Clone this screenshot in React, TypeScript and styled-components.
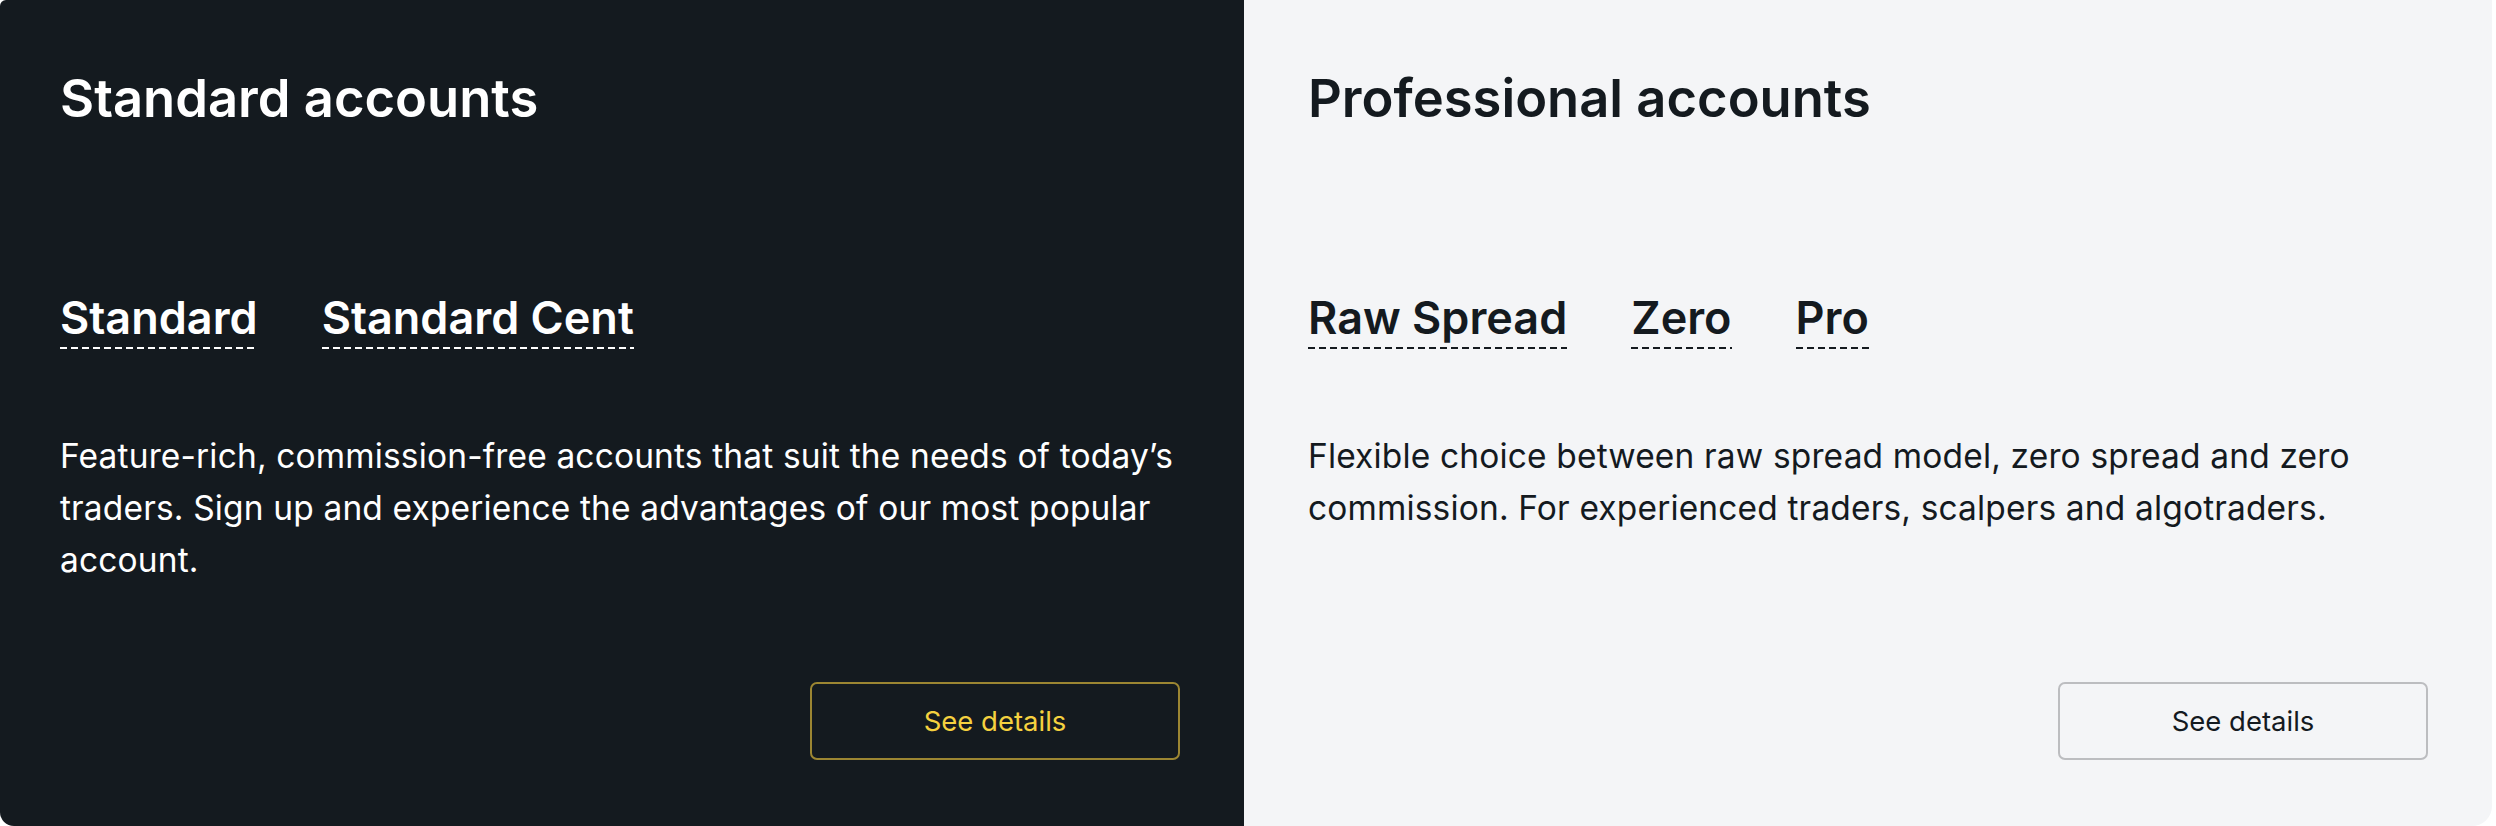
import React from 'react';
import styled, { createGlobalStyle, css } from 'styled-components';

const GlobalStyle = createGlobalStyle`
  html, body {
    margin: 0;
    padding: 0;
    background: #ffffff;
  }
  body {
    font-family: Inter, "Noto Sans", "Liberation Sans", sans-serif;
    -webkit-font-smoothing: antialiased;
  }
`;

type Tone = 'dark' | 'light';

const Layout = styled.div`
  display: grid;
  grid-template-columns: 1244px 1248px;
  width: 2492px;
  height: 826px;
`;

const Card = styled.section<{ $tone: Tone }>`
  display: flex;
  flex-direction: column;
  padding: 67px 64px 66px;
  box-sizing: border-box;
  ${props =>
    props.$tone === 'dark'
      ? css`
          background: #141a1f;
          color: #ffffff;
          padding-left: 60px;
          border-radius: 6px 0 0 14px;
        `
      : css`
          background: #f4f5f7;
          color: #141a1f;
          border-radius: 0 0 20px 0;
        `}
`;

const Title = styled.h2`
  margin: 0;
  font-size: 52.5px;
  line-height: 62px;
  font-weight: 600;
`;

const Tabs = styled.div`
  display: flex;
  gap: 64px;
  margin-top: 162px;
`;

const Tab = styled.span<{ $tone: Tone }>`
  font-size: 45px;
  line-height: 54px;
  font-weight: 600;
  padding-bottom: 4px;
  cursor: pointer;
  background-image: repeating-linear-gradient(
    to right,
    ${props => (props.$tone === 'dark' ? '#ffffff' : '#141a1f')} 0 7px,
    transparent 7px 11px
  );
  background-size: 100% 2px;
  background-position: left bottom;
  background-repeat: no-repeat;
`;

const Description = styled.p`
  margin: 81px 0 0;
  font-size: 33.5px;
  line-height: 52px;
  font-weight: 400;
  letter-spacing: 0.15px;
`;

const DetailsButton = styled.button<{ $tone: Tone }>`
  margin-top: auto;
  align-self: flex-end;
  width: 370px;
  height: 78px;
  border-radius: 7px;
  background: transparent;
  font-family: inherit;
  font-size: 27.5px;
  font-weight: 400;
  cursor: pointer;
  ${props =>
    props.$tone === 'dark'
      ? css`
          border: 2px solid #9c8632;
          color: #f5d13f;
        `
      : css`
          border: 2px solid #bcbdc0;
          color: #141a1f;
        `}
`;

interface AccountGroup {
  tone: Tone;
  title: string;
  tabs: string[];
  text: string;
}

const groups: AccountGroup[] = [
  {
    tone: 'dark',
    title: 'Standard accounts',
    tabs: ['Standard', 'Standard Cent'],
    text: 'Feature-rich, commission-free accounts that suit the needs of today\u2019s traders. Sign up and experience the advantages of our most popular account.',
  },
  {
    tone: 'light',
    title: 'Professional accounts',
    tabs: ['Raw Spread', 'Zero', 'Pro'],
    text: 'Flexible choice between raw spread model, zero spread and zero commission. For experienced traders, scalpers and algotraders.',
  },
];

export default function App() {
  return (
    <>
      <GlobalStyle />
      <Layout>
        {groups.map(group => (
          <Card key={group.title} $tone={group.tone}>
            <Title>{group.title}</Title>
            <Tabs>
              {group.tabs.map(tab => (
                <Tab key={tab} $tone={group.tone}>
                  {tab}
                </Tab>
              ))}
            </Tabs>
            <Description>{group.text}</Description>
            <DetailsButton $tone={group.tone}>See details</DetailsButton>
          </Card>
        ))}
      </Layout>
    </>
  );
}
